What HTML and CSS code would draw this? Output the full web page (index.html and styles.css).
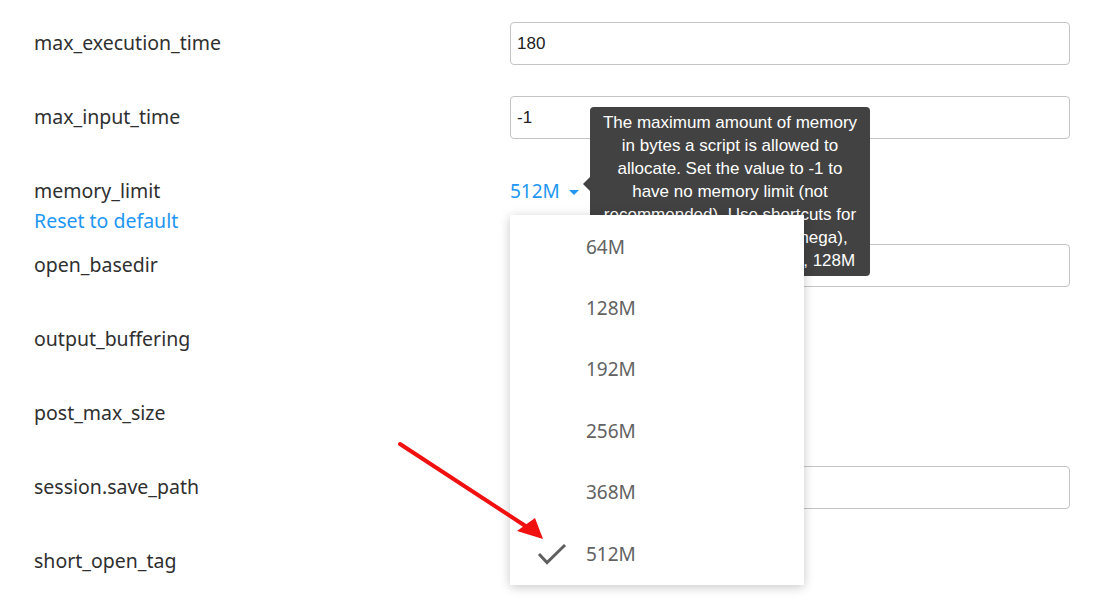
FILE: index.html
```html
<!DOCTYPE html>
<html lang="en">
<head>
  <meta charset="UTF-8">
  <title>PHP Settings</title>
  <link rel="stylesheet" href="styles.css">
</head>
<body>
  <div class="settings">
    <div class="row">
      <div class="name">max_execution_time</div>
      <div class="value"><input class="field" type="text" value="180"></div>
    </div>
    <div class="row">
      <div class="name">max_input_time</div>
      <div class="value"><input class="field" type="text" value="-1"></div>
    </div>
    <div class="row">
      <div class="name">memory_limit<br><a class="reset" href="#">Reset to default</a></div>
      <div class="value">
        <div class="select"><span class="current">512M</span><span class="caret"></span></div>

        <div class="tooltip">
          The maximum amount of memory in bytes a script is allowed to allocate. Set the value to -1 to have no memory limit (not recommended). Use shortcuts for byte values: K (kilo), M (mega), and&nbsp;G&nbsp;(giga). For example, 128M
        </div>

        <ul class="menu">
          <li>64M</li>
          <li>128M</li>
          <li>192M</li>
          <li>256M</li>
          <li>368M</li>
          <li class="selected">
            <svg class="check" width="30" height="24" viewBox="0 0 30 24"><polyline points="2,12 10,20.5 28,3" fill="none" stroke="#5f5f5f" stroke-width="3"/></svg>
            512M
          </li>
        </ul>
      </div>
    </div>
    <div class="row">
      <div class="name">open_basedir</div>
      <div class="value"><input class="field" type="text" value=""></div>
    </div>
    <div class="row">
      <div class="name">output_buffering</div>
      <div class="value"></div>
    </div>
    <div class="row">
      <div class="name">post_max_size</div>
      <div class="value"></div>
    </div>
    <div class="row">
      <div class="name">session.save_path</div>
      <div class="value"><input class="field" type="text" value=""></div>
    </div>
    <div class="row">
      <div class="name">short_open_tag</div>
      <div class="value"></div>
    </div>
  </div>

  <!-- annotation arrow -->
  <svg class="pointer" width="160" height="110" viewBox="0 0 160 110">
    <line x1="5" y1="6" x2="132" y2="89" stroke="#f01010" stroke-width="4" stroke-linecap="round"/>
    <polygon points="148,101 122,93 140,80" fill="#f01010"/>
  </svg>
</body>
</html>
```

FILE: styles.css
```css
body {
  margin: 0;
  background: #fff;
  font-family: "Noto Sans", sans-serif;
  color: #2f2f2f;
}
.settings {
  padding: 6px 0 0 34px;
}
.row {
  display: flex;
  height: 74px;
}
.name {
  width: 476px;
  padding-top: 22px;
  font-size: 19.5px;
  line-height: 30px;
}
.reset {
  color: #2196f3;
  text-decoration: none;
}
.value {
  position: relative;
  width: 560px;
}
.field {
  box-sizing: border-box;
  width: 560px;
  height: 43px;
  margin-top: 16px;
  padding: 0 6px;
  border: 1px solid #c4c4c4;
  border-radius: 4px;
  font-family: "Liberation Sans", Arial, sans-serif;
  font-size: 17px;
  color: #222;
  outline: none;
}

/* memory_limit select */
.select {
  display: flex;
  align-items: center;
  padding-top: 22px;
  height: 30px;
  font-size: 19px;
  color: #2196f3;
}
.caret {
  width: 0;
  height: 0;
  margin-left: 9px;
  margin-top: 2px;
  border-left: 5px solid transparent;
  border-right: 5px solid transparent;
  border-top: 5px solid #2196f3;
}
.tooltip {
  position: absolute;
  left: 80px;
  top: -47px;
  z-index: 2;
  box-sizing: border-box;
  width: 280px;
  height: 169px;
  padding: 4px 12px 0;
  background: #424242;
  border-radius: 4px;
  color: #fff;
  font-family: "Liberation Sans", Arial, sans-serif;
  font-size: 17px;
  line-height: 23px;
  text-align: center;
}
.tooltip::before {
  content: "";
  position: absolute;
  left: -7px;
  top: 70px;
  border-top: 7px solid transparent;
  border-bottom: 7px solid transparent;
  border-right: 7px solid #424242;
}
.menu {
  position: absolute;
  left: 0;
  top: 61px;
  z-index: 3;
  width: 294px;
  margin: 0;
  padding: 1px 0 0;
  list-style: none;
  background: #fff;
  box-shadow: 0 2px 10px rgba(0, 0, 0, 0.22);
}
.menu li {
  position: relative;
  height: 61.4px;
  padding-left: 76px;
  font-size: 19px;
  line-height: 61.4px;
  color: #626262;
}
.menu li:first-child {
  height: 62px;
  line-height: 62px;
}
.check {
  position: absolute;
  left: 27px;
  top: 18px;
}
.pointer {
  position: absolute;
  left: 395px;
  top: 438px;
  z-index: 4;
}
```
